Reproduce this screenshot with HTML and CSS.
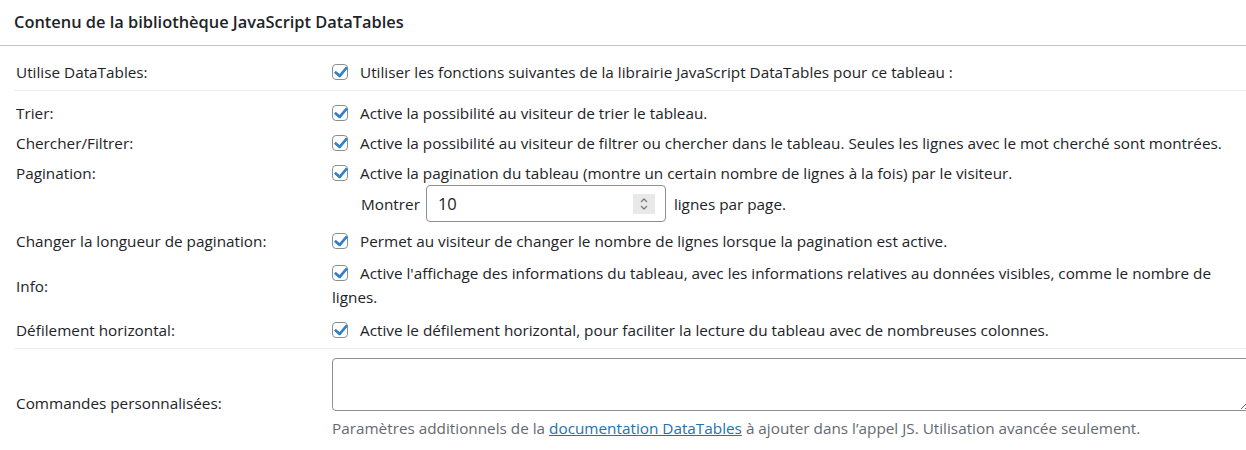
FILE: index.html
```
<!DOCTYPE html>
<html lang="fr">
<head>
    <meta charset="UTF-8">
    <title>Options DataTables</title>
    <link rel="stylesheet" href="styles.css">
</head>
<body>
    <div class="postbox">
        <div class="postbox-header">
            <h2>Contenu de la bibliothèque JavaScript DataTables</h2>
        </div>
        <div class="inside">
            <table class="options-table">
                <tbody>
                    <tr class="row-first row-last">
                        <th>Utilise DataTables:</th>
                        <td><label><input type="checkbox" checked> Utiliser les fonctions suivantes de la librairie JavaScript DataTables pour ce tableau :</label></td>
                    </tr>
                </tbody>
                <tbody>
                    <tr class="row-first">
                        <th>Trier:</th>
                        <td><label><input type="checkbox" checked> Active la possibilité au visiteur de trier le tableau.</label></td>
                    </tr>
                    <tr>
                        <th>Chercher/Filtrer:</th>
                        <td><label><input type="checkbox" checked> Active la possibilité au visiteur de filtrer ou chercher dans le tableau. Seules les lignes avec le mot cherché sont montrées.</label></td>
                    </tr>
                    <tr class="row-pagination">
                        <th class="top-align">Pagination:</th>
                        <td>
                            <label><input type="checkbox" checked> Active la pagination du tableau (montre un certain nombre de lignes à la fois) par le visiteur.</label>
                            <div class="pagination-length">
                                <span>Montrer</span>
                                <span class="number-field">
                                    <input type="number" value="10">
                                    <span class="spin">
                                        <svg width="10" height="16" viewBox="0 0 10 16"><path d="M2 6 L5 3 L8 6 M2 10 L5 13 L8 10" fill="none" stroke="#7b7b7b" stroke-width="1.3"/></svg>
                                    </span>
                                </span>
                                <span>lignes par page.</span>
                            </div>
                        </td>
                    </tr>
                    <tr>
                        <th>Changer la longueur de pagination:</th>
                        <td><label><input type="checkbox" checked> Permet au visiteur de changer le nombre de lignes lorsque la pagination est active.</label></td>
                    </tr>
                    <tr class="row-info">
                        <th>Info:</th>
                        <td><label><input type="checkbox" checked> Active l'affichage des informations du tableau, avec les informations relatives au données visibles, comme le nombre de lignes.</label></td>
                    </tr>
                    <tr class="row-last">
                        <th>Défilement horizontal:</th>
                        <td><label><input type="checkbox" checked> Active le défilement horizontal, pour faciliter la lecture du tableau avec de nombreuses colonnes.</label></td>
                    </tr>
                </tbody>
                <tbody>
                    <tr class="row-custom">
                        <th>Commandes personnalisées:</th>
                        <td>
                            <textarea rows="2"></textarea>
                            <p class="description">Paramètres additionnels de la <a href="#">documentation DataTables</a> à ajouter dans l’appel JS. Utilisation avancée seulement.</p>
                        </td>
                    </tr>
                </tbody>
            </table>
        </div>
    </div>
</body>
</html>
```
FILE: styles.css
```
body {
    margin: 0;
    background: #fff;
    font-family: 'Open Sans', sans-serif;
    font-size: 15.3px;
    line-height: 20px;
    color: #1d2327;
    overflow: hidden;
}

.postbox {
    width: 1262px;
}

.postbox-header {
    height: 45px;
    border-bottom: 1px solid #c3c4c7;
    display: flex;
    align-items: center;
}

.postbox-header h2 {
    margin: 0;
    padding: 0 0 1px 14px;
    font-size: 16.4px;
    font-weight: 600;
    color: #1d2327;
}

.inside {
    padding: 0 12px 0 14px;
}

.options-table {
    width: 100%;
    border-collapse: collapse;
}

.options-table th {
    width: 316px;
    padding: 5px 0 5px 2px;
    text-align: left;
    font-weight: normal;
    vertical-align: middle;
}

.options-table td {
    padding: 5px 0;
    vertical-align: middle;
    color: #1d2327;
}

.options-table th.top-align {
    vertical-align: top;
}

.options-table tbody:first-child .row-first th,
.options-table tbody:first-child .row-first td {
    padding-top: 16px;
}

.options-table .row-first th,
.options-table .row-first td {
    padding-top: 12px;
}

.options-table .row-last th,
.options-table .row-last td {
    padding-bottom: 8px;
    border-bottom: 1px solid #f0f0f1;
}

.options-table .row-pagination td {
    padding-bottom: 4px;
}

.options-table .row-info td {
    padding-bottom: 6px;
    line-height: 24px;
}

.options-table .row-custom td {
    padding: 9px 0 19px;
}

input[type="checkbox"] {
    appearance: none;
    width: 16px;
    height: 16px;
    margin: 0 8px 0 0;
    border: 1px solid #8c8f94;
    border-radius: 4px;
    background: #fff;
    vertical-align: -2px;
    position: relative;
    box-sizing: border-box;
}

input[type="checkbox"]:checked::before {
    content: "";
    position: absolute;
    left: 4px;
    top: -1px;
    width: 5px;
    height: 10px;
    border-right: 3.2px solid #3582c4;
    border-bottom: 3.2px solid #3582c4;
    transform: rotate(40deg);
    border-radius: 0 0 2px 0;
}

.pagination-length {
    display: flex;
    align-items: center;
    gap: 6px;
    margin-top: 2px;
    padding-left: 29px;
}

.number-field {
    display: inline-flex;
    align-items: center;
    width: 240px;
    height: 37px;
    box-sizing: border-box;
    border: 1px solid #8c8f94;
    border-radius: 4px;
    padding: 0 10px 0 11px;
    margin-right: 2px;
}

.number-field input {
    flex: 1;
    min-width: 0;
    border: none;
    outline: none;
    padding: 0;
    font-family: 'Open Sans', sans-serif;
    font-size: 16.5px;
    color: #1d2327;
    background: transparent;
    appearance: textfield;
}

.number-field input::-webkit-inner-spin-button,
.number-field input::-webkit-outer-spin-button {
    -webkit-appearance: none;
    margin: 0;
}

.spin {
    display: flex;
    align-items: center;
    justify-content: center;
    width: 22px;
    height: 20px;
    background: #e9e9e9;
}

textarea {
    display: block;
    width: 100%;
    height: 53px;
    box-sizing: border-box;
    border: 1px solid #8c8f94;
    border-radius: 4px;
    resize: vertical;
    font-family: 'Open Sans', sans-serif;
}

.description {
    margin: 7px 0 0;
    color: #646970;
}

.description a {
    color: #2271b1;
}
```
